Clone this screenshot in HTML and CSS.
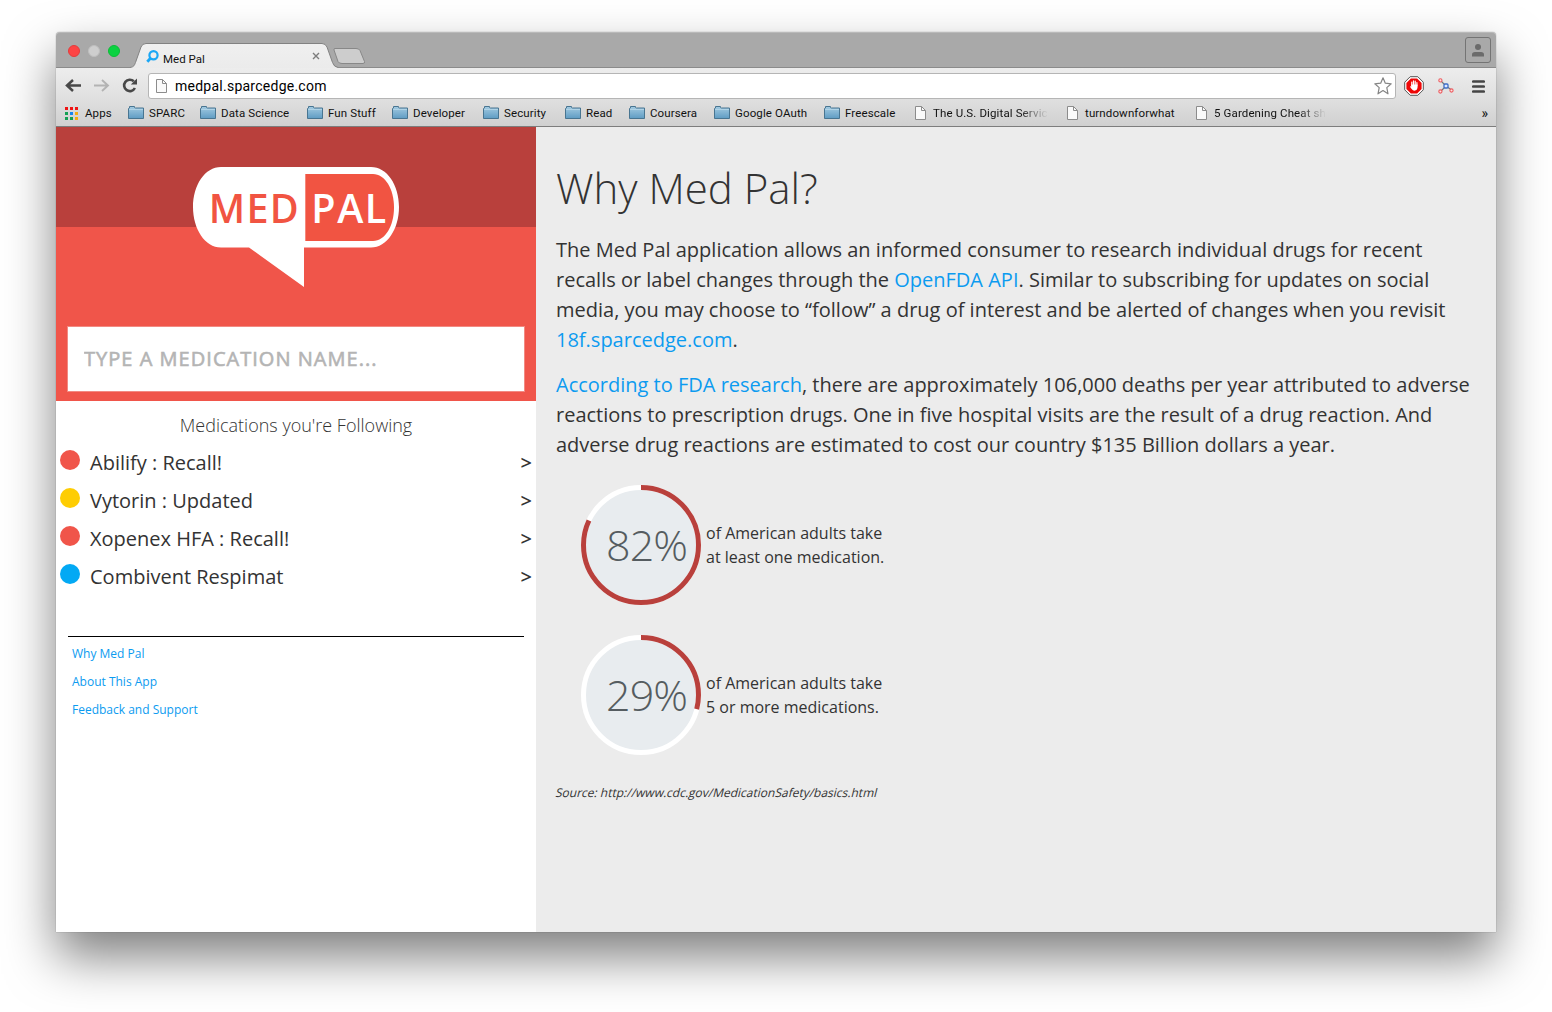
FILE: index.html
```html
<!DOCTYPE html>
<html lang="en">
<head>
<meta charset="utf-8">
<title>Med Pal</title>
<link rel="stylesheet" href="styles.css">
</head>
<body>
<svg class="defs" width="0" height="0" aria-hidden="true">
  <defs>
    <linearGradient id="blue" x1="0" y1="0" x2="0" y2="1"><stop offset="0" stop-color="#a4cbe2"/><stop offset="1" stop-color="#5f9cc3"/></linearGradient>
    <linearGradient id="tabfill" x1="0" y1="0" x2="0" y2="1"><stop offset="0" stop-color="#f0f0f0"/><stop offset="1" stop-color="#ebebeb"/></linearGradient>
    <symbol id="folder" viewBox="0 0 16 14"><path d="M.5 12.500V2.500L1.500 2V.5h5v1l1 .5h8v10.500z" fill="url(#blue)" stroke="#487591"/><path d="M1 3.500h14" stroke="#b0d3e6"/></symbol>
    <symbol id="page" viewBox="0 0 11 14"><path d="M.5.5h6l4 4v9H.5z" fill="#fafafa" stroke="#8c8c8c"/><path d="M6.500.5v4h4" fill="none" stroke="#8c8c8c"/></symbol>
  </defs>
</svg>
<div class="window">
  <div class="tabstrip">
    <div class="lights"><i class="close"></i><i class="min"></i><i class="max"></i></div>
    <div class="tab">
      <svg class="tab-shape" width="240" height="26" viewBox="0 0 240 26"><path d="M0 25.500C4 25 4.500 23 5.500 20.500L11 5Q12.300 1.500 16 1.500H192Q195.500 1.500 197 5L202.500 20.500Q204 25 208 25.500V26H0Z" fill="url(#tabfill)"/><path d="M0 25.500C4 25 4.500 23 5.500 20.500L11 5Q12.300 1.500 16 1.500H192Q195.500 1.500 197 5L202.500 20.500Q204 25 208 25.500" fill="none" stroke="#828282"/><path d="M204 8Q203.500 6.500 205 6.500H226Q229 6.500 230 8.500L234.500 19.500Q235 21.500 233 21.500H212Q209 21.500 208 19.500Z" fill="#cdcdcd" stroke="#888"/></svg>
      <div class="tab-content">
        <svg width="13" height="13" viewBox="0 0 13 13"><circle cx="7.500" cy="5.200" r="4.100" fill="none" stroke="#1ba7f5" stroke-width="2.200"/><path d="M4.700 8 1.300 11.700" stroke="#1ba7f5" stroke-width="2.800"/></svg>
        <span class="tab-title">Med Pal</span>
        <svg width="8" height="8" viewBox="0 0 8 8"><path d="M1 1l6 6M7 1 1 7" stroke="#7c7c7c" stroke-width="1.400"/></svg>
      </div>
    </div>
    <div class="profile"><svg width="12" height="13" viewBox="0 0 12 13"><circle cx="6" cy="3" r="3" fill="#6b6b6b"/><path d="M0 12.500V10.500Q0 8 3 8H9Q12 8 12 10.500v2z" fill="#6b6b6b"/></svg></div>
  </div>
  <div class="toolbar">
    <svg class="nav" width="76" height="18" viewBox="0 0 76 18"><path d="M3 8.500H17M9 3 3 8.500 9 14" fill="none" stroke="#484848" stroke-width="2.500"/><path d="M30 8.500H44M38 3l6 5.500-6 5.500" fill="none" stroke="#b3b3b3" stroke-width="1.900"/><path d="M69.800 4.300A5.700 5.700 0 1 0 70.900 11" fill="none" stroke="#484848" stroke-width="2.600"/><path d="M73 1.500V7.500H66.800z" fill="#484848"/></svg>
    <div class="address">
      <svg width="11" height="14"><use href="#page"/></svg>
      <span>medpal.sparcedge.com</span>
      <svg width="18" height="18" viewBox="0 0 18 18"><path d="M9 .8 11.300 6.200 17.200 6.800 12.800 10.600 14 16.800 9 13.500 4 16.800 5.200 10.600.8 6.800 6.700 6.200z" fill="#fff" stroke="#858585" stroke-linejoin="round" stroke-width="1.200"/></svg>
    </div>
    <svg class="block" width="20" height="20" viewBox="0 0 20 20"><path d="M6.200.7h7.600l5.500 5.500v7.600l-5.500 5.500H6.200L.7 13.800V6.200z" fill="#fff" stroke="#555"/><path d="M6.900 2.400h6.200l4.500 4.500v6.200l-4.500 4.500H6.900l-4.500-4.500V6.900z" fill="#ee0707"/><path d="M7.800 9.500V6M9.500 9V4.800M11.200 9V5.200M12.900 10V6.500" stroke="#fff" stroke-width="1.200" stroke-linecap="round"/><path d="M7.300 8.500h6.200V12Q13 14.600 10.500 14.800 8.500 14.600 6 10.700 6.200 9.800 7.300 10.500z" fill="#fff"/></svg>
    <svg class="graph" width="16" height="16" viewBox="0 0 16 16"><path d="M2.500 2.500 8 8l5.500 4M8 8l-5.500 5.500" stroke="#777" stroke-width="1.200" fill="none"/><g fill="#fbe3e3" stroke="#ee5c60" stroke-width="1.100"><circle cx="2.400" cy="2.400" r="1.600"/><circle cx="2.400" cy="13.500" r="1.600"/><circle cx="13.500" cy="12.500" r="1.600"/></g><rect x="6" y="6" width="4" height="4" rx="1" fill="#dce8ff" stroke="#3c6dc8" stroke-width="1.300"/></svg>
    <svg class="menu" width="13" height="13" viewBox="0 0 13 13"><path d="M1.300 1.500H11.700M1.300 6.500H11.700M1.300 11.500H11.700" stroke="#454545" stroke-width="2.700" stroke-linecap="round"/></svg>
  </div>
  <div class="bookmarks">
    <div class="bm apps"><svg width="13" height="13" viewBox="0 0 13 13"><path d="M0 0h3v3H0zM5 0h3v3H5zM10 0h3v3h-3z" fill="#ee1414"/><path d="M0 5h3v3H0zM0 10h3v3H0zM5 10h3v3H5z" fill="#15a053"/><path d="M5 5h3v3H5z" fill="#1685ef"/><path d="M10 5h3v3h-3zM10 10h3v3h-3z" fill="#f7ac10"/></svg><span>Apps</span></div>
    <div class="bm"><svg width="16" height="14"><use href="#folder"/></svg><span>SPARC</span></div>
    <div class="bm"><svg width="16" height="14"><use href="#folder"/></svg><span>Data Science</span></div>
    <div class="bm"><svg width="16" height="14"><use href="#folder"/></svg><span>Fun Stuff</span></div>
    <div class="bm"><svg width="16" height="14"><use href="#folder"/></svg><span>Developer</span></div>
    <div class="bm"><svg width="16" height="14"><use href="#folder"/></svg><span>Security</span></div>
    <div class="bm"><svg width="16" height="14"><use href="#folder"/></svg><span>Read</span></div>
    <div class="bm"><svg width="16" height="14"><use href="#folder"/></svg><span>Coursera</span></div>
    <div class="bm"><svg width="16" height="14"><use href="#folder"/></svg><span>Google OAuth</span></div>
    <div class="bm"><svg width="16" height="14"><use href="#folder"/></svg><span>Freescale</span></div>
    <div class="bm file"><svg width="11" height="14"><use href="#page"/></svg><span class="fade">The U.S. Digital Servic</span></div>
    <div class="bm file"><svg width="11" height="14"><use href="#page"/></svg><span>turndownforwhat</span></div>
    <div class="bm file"><svg width="11" height="14"><use href="#page"/></svg><span class="fade">5 Gardening Cheat sh</span></div>
    <div class="more">»</div>
  </div>
  <div class="app">
    <aside class="sidebar">
      <header class="brand">
        <svg class="logo" width="206" height="120" viewBox="0 0 206 120">
          <path d="M28 0H178C194 0 206 18 206 40S194 80.500 178 80.500H111V120L56 80.500H28C12 80.500 0 62 0 40S12 0 28 0Z" fill="#fff"/>
          <path d="M112.300 7H180C192 7 201 22 201 40.500S192 74 180 74H112.300Z" fill="#f15442"/>
          <text x="15.800" y="55.500" class="logo-text med" textLength="90" lengthAdjust="spacing">MED</text>
          <text x="118.300" y="55.500" class="logo-text pal" textLength="75" lengthAdjust="spacing">PAL</text>
        </svg>
        <input class="search" type="text" placeholder="TYPE A MEDICATION NAME...">
      </header>
      <h2>Medications you're Following</h2>
      <ul class="meds">
        <li><i class="dot recall"></i><span>Abilify : Recall!</span><b>&gt;</b></li>
        <li><i class="dot updated"></i><span>Vytorin : Updated</span><b>&gt;</b></li>
        <li><i class="dot recall"></i><span>Xopenex HFA : Recall!</span><b>&gt;</b></li>
        <li><i class="dot ok"></i><span>Combivent Respimat</span><b>&gt;</b></li>
      </ul>
      <nav class="links"><a>Why Med Pal</a><a>About This App</a><a>Feedback and Support</a></nav>
    </aside>
    <main class="main">
      <h1>Why Med Pal?</h1>
      <p>The Med Pal application allows an informed consumer to research individual drugs for recent<br>recalls or label changes through the <a>OpenFDA API</a>. Similar to subscribing for updates on social<br>media, you may choose to “follow” a drug of interest and be alerted of changes when you revisit<br><a>18f.sparcedge.com</a>.</p>
      <p><a>According to FDA research</a>, there are approximately 106,000 deaths per year attributed to adverse<br>reactions to prescription drugs. One in five hospital visits are the result of a drug reaction. And<br>adverse drug reactions are estimated to cost our country $135 Billion dollars a year.</p>
      <div class="stat">
        <svg width="120" height="120" viewBox="0 0 120 120"><circle cx="60" cy="60" r="57.500" fill="#e8ecef" stroke="#fff" stroke-width="5"/><circle cx="60" cy="60" r="57.500" fill="none" stroke="#b9403c" stroke-width="5" pathLength="100" stroke-dasharray="82 100" transform="rotate(-90 60 60)"/><text x="25" y="76" class="percent" textLength="82">82%</text></svg>
        <div>of American adults take<br>at least one medication.</div>
      </div>
      <div class="stat">
        <svg width="120" height="120" viewBox="0 0 120 120"><circle cx="60" cy="60" r="57.500" fill="#e8ecef" stroke="#fff" stroke-width="5"/><circle cx="60" cy="60" r="57.500" fill="none" stroke="#b9403c" stroke-width="5" pathLength="100" stroke-dasharray="29 100" transform="rotate(-90 60 60)"/><text x="25" y="76" class="percent" textLength="82">29%</text></svg>
        <div>of American adults take<br>5 or more medications.</div>
      </div>
      <p class="source">Source: http://www.cdc.gov/MedicationSafety/basics.html</p>
    </main>
  </div>
</div>
</body>
</html>
```
FILE: styles.css
```css
* { box-sizing: border-box; }
body { margin: 0; height: 1012px; padding: 32px 56px; background: #fff; overflow: hidden; font-family: "Open Sans", sans-serif; color: #333; }
svg { display: block; flex: none; }
.defs { position: absolute; }
.window { width: 1440px; height: 900px; display: flex; flex-direction: column; box-shadow: 0 0 1px rgba(0,0,0,.6), 0 25px 50px rgba(0,0,0,.5); border-radius: 4px 4px 0 0; }

.tabstrip { height: 36px; display: flex; align-items: flex-end; background: #a9a9a9; border-bottom: 1px solid #8b8b8b; border-top: 1px solid #b9b9b9; border-radius: 4px 4px 0 0; font-family: Roboto, sans-serif; }
.lights { width: 74px; padding: 0 0 10px 12px; display: flex; gap: 8px; }
.lights i { width: 12px; height: 12px; border-radius: 50%; }
.close { background: #fd4444; border: 1px solid #e53b3b; }
.min { background: #cecece; border: 1px solid #bfbfbf; }
.max { background: #0bd241; border: 1px solid #0bbd37; }
.tab { width: 240px; height: 26px; display: grid; margin-bottom: -1px; }
.tab-shape, .tab-content { grid-area: 1 / 1; }
.tab-content { display: flex; padding: 8px 50px 0 16px; width: 240px; align-items: flex-start; }
.tab-title { flex: 1; font-size: 11.500px; line-height: 18px; padding-left: 4px; color: #111; }
.tab-content svg:last-child { margin-top: 2px; }
.profile { margin: 0 5px 4px auto; width: 26px; height: 26px; border: 1px solid #747474; border-radius: 3px; display: flex; align-items: center; justify-content: center; }

.toolbar { height: 32px; flex: none; display: flex; align-items: center; background: linear-gradient(#ededed, #dfdfdf); font-family: Roboto, sans-serif; padding: 4px 11px 0 8px; }
.nav { margin-right: 8px; }
.address { width: 1248px; height: 26px; background: #fff; border: 1px solid #b5b5b5; border-radius: 3px; display: flex; align-items: center; padding: 0 3px 0 7px; font-size: 14px; color: #000; }
.address span { flex: 1; padding-left: 8px; letter-spacing: .25px; }
.block { margin-left: 8px; }
.graph { margin-left: 14px; }
.menu { margin-left: 18px; }

.bookmarks { height: 27px; flex: none; display: grid; grid-template-columns: 64px 72px 107px 85px 91px 82px 64px 85px 110px 91px 152px 129px 1fr auto; align-items: center; padding: 0 8px; background: linear-gradient(#dfdfdf, #d0d0d0); border-bottom: 1px solid #7d7d7d; font-family: Roboto, sans-serif; font-size: 11.500px; color: #111; }
.bm { display: flex; align-items: center; gap: 5px; white-space: nowrap; letter-spacing: .12px; }
.bm.apps { padding-left: 1px; gap: 7px; }
.bm.file { gap: 7px; }
.fade { -webkit-mask-image: linear-gradient(90deg, #000 75%, transparent); mask-image: linear-gradient(90deg, #000 75%, transparent); }
.more { font-size: 14px; }

.app { flex: 1; display: flex; min-height: 0; }
.sidebar { width: 480px; background: #fff; }
.brand { height: 274px; display: flex; flex-direction: column; align-items: center; padding-top: 40px; background: linear-gradient(#b9403c 100px, #f0554a 100px); }
.logo-text { font-size: 39.500px; font-weight: 550; }
.med { fill: #f15442; }
.pal { fill: #fff; }
.search { width: 458px; height: 66px; margin: 39px 0 0; padding: 0 16px 2px; border: 1px solid #f28a82; background: #fff; font: 500 20px "Open Sans", sans-serif; letter-spacing: 1.030px; outline: 0; border-radius: 0; }
.search::placeholder { color: #b4b4b4; opacity: 1; -webkit-text-stroke: .6px #b4b4b4; }
h2 { margin: 12px 0 5px; font-size: 18px; line-height: 25px; font-weight: 300; text-align: center; }
.meds { list-style: none; margin: 0; padding: 0; font-size: 20px; }
.meds li { height: 38px; display: flex; align-items: center; padding: 0 4px; }
.meds b { margin-left: auto; font-weight: 600; font-size: 20px; }
.dot { width: 20px; height: 20px; border-radius: 50%; margin: -5px 10px 0 0; }
.recall { background: #f0554a; }
.updated { background: #fecd03; }
.ok { background: #03a9f4; }
.links { margin: 41px 12px 0; padding: 3px 4px; border-top: 1px solid #000; display: flex; flex-direction: column; font-size: 12px; line-height: 28px; }
a { color: #0c9bf0; }
.main { flex: 1; background: #ececec; padding: 31px 20px 0; }
h1 { margin: 0 0 17px; font-size: 42px; line-height: 60px; font-weight: 300; }
p { margin: 0 0 15px; font-size: 20px; line-height: 30px; white-space: nowrap; }
.stat { height: 120px; margin: 25px 0 30px 25px; display: flex; align-items: center; gap: 5px; font-size: 16px; line-height: 24px; }
.percent { font-size: 43px; font-weight: 300; fill: #555c60; }
.source { width: fit-content; font-size: 12px; line-height: 16px; transform: skewX(-14deg); }
```
